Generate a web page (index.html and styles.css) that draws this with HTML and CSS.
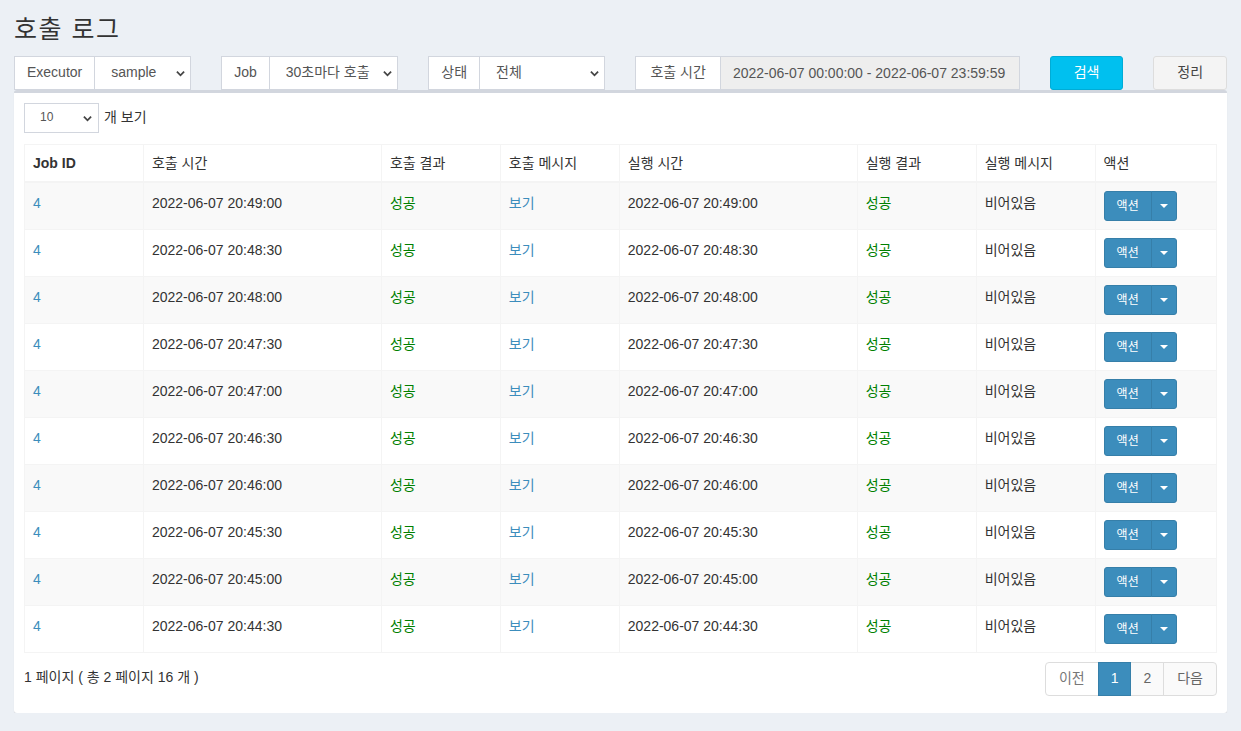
FILE: index.html
```html
<!DOCTYPE html>
<html lang="ko">
<head>
  <meta charset="UTF-8" />
  <title>호출 로그</title>
  <meta name="viewport" content="width=device-width, initial-scale=1" />
  <link rel="stylesheet" href="styles.css">
</head>
<body>

  <section class="content-header">
    <h1>호출 로그</h1>
  </section>

  <section class="content">

    <!-- Filters -->
    <div class="filter-row">
      <div class="col col-2">
        <div class="input-group">
          <span class="addon">Executor</span>
          <div class="select-wrap">
            <select class="form-select"><option>sample</option></select>
            <svg class="chevron" viewBox="0 0 10 7"><polyline points="1,1.5 5,5.5 9,1.5" /></svg>
          </div>
        </div>
      </div>
      <div class="col col-2">
        <div class="input-group">
          <span class="addon">Job</span>
          <div class="select-wrap">
            <select class="form-select"><option>30초마다 호출</option></select>
            <svg class="chevron" viewBox="0 0 10 7"><polyline points="1,1.5 5,5.5 9,1.5" /></svg>
          </div>
        </div>
      </div>
      <div class="col col-2">
        <div class="input-group">
          <span class="addon">상태</span>
          <div class="select-wrap">
            <select class="form-select"><option>전체</option></select>
            <svg class="chevron" viewBox="0 0 10 7"><polyline points="1,1.5 5,5.5 9,1.5" /></svg>
          </div>
        </div>
      </div>
      <div class="col col-4">
        <div class="input-group">
          <span class="addon addon-wide">호출 시간</span>
          <input class="form-input" type="text" readonly value="2022-06-07 00:00:00 - 2022-06-07 23:59:59">
        </div>
      </div>
      <div class="col col-1">
        <button class="btn btn-info">검색</button>
      </div>
      <div class="col col-1">
        <button class="btn btn-default">정리</button>
      </div>
    </div>

    <!-- Log table -->
    <div class="box">
      <div class="length-row">
        <div class="select-wrap select-sm">
          <select class="form-select"><option>10</option></select>
          <svg class="chevron" viewBox="0 0 10 7"><polyline points="1,1.5 5,5.5 9,1.5" /></svg>
        </div>
        <span>개 보기</span>
      </div>

      <table class="log-table">
        <thead>
          <tr>
            <th class="w10 bold">Job ID</th>
            <th class="w20">호출 시간</th>
            <th class="w10">호출 결과</th>
            <th class="w10">호출 메시지</th>
            <th class="w20">실행 시간</th>
            <th class="w10">실행 결과</th>
            <th class="w10">실행 메시지</th>
            <th>액션</th>
          </tr>
        </thead>
        <tbody id="logRows"></tbody>
      </table>

      <div class="table-footer">
        <div class="info">1 페이지 ( 총 2 페이지 16 개 )</div>
        <ul class="pagination">
          <li class="disabled"><a>이전</a></li>
          <li class="active"><a>1</a></li>
          <li><a>2</a></li>
          <li><a>다음</a></li>
        </ul>
      </div>
    </div>

  </section>

  <script>
    const times = [
      "20:49:00", "20:48:30", "20:48:00", "20:47:30", "20:47:00",
      "20:46:30", "20:46:00", "20:45:30", "20:45:00", "20:44:30"
    ];

    const tbody = document.getElementById("logRows");
    times.forEach(t => {
      const stamp = "2022-06-07 " + t;
      const tr = document.createElement("tr");
      tr.innerHTML =
        '<td><a class="link">4</a></td>' +
        '<td>' + stamp + '</td>' +
        '<td class="ok">성공</td>' +
        '<td><a class="link">보기</a></td>' +
        '<td>' + stamp + '</td>' +
        '<td class="ok">성공</td>' +
        '<td>비어있음</td>' +
        '<td class="action-cell"><div class="btn-group">' +
          '<button class="btn-action">액션</button>' +
          '<button class="btn-action btn-caret"><span class="caret"></span></button>' +
        '</div></td>';
      tbody.appendChild(tr);
    });
  </script>

</body>
</html>
```

FILE: styles.css
```css
body {
  margin: 0;
  background: #ecf0f5;
  color: #333;
  font-family: "Liberation Sans", "Noto Sans CJK KR", sans-serif;
  font-size: 14px;
  line-height: 1.42857;
}

.content-header {
  padding: 16px 14px 0;
}

.content-header h1 {
  margin: 0;
  font-size: 25px;
  font-weight: 400;
  letter-spacing: 1.5px;
  line-height: 26px;
}

.content {
  padding: 14px 14px 0;
}

/* Filter row, 12 column grid */
.filter-row {
  display: flex;
  margin: 0 -15px;
}

.col {
  box-sizing: border-box;
  padding: 0 15px;
}

.col-1 { width: 8.3333%; }
.col-2 { width: 16.6667%; }
.col-4 { width: 33.3333%; }

.input-group {
  display: flex;
  height: 34px;
}

.addon {
  flex: none;
  box-sizing: border-box;
  padding: 6px 12px;
  border: 1px solid #d2d6de;
  background: #fff;
  color: #555;
  white-space: nowrap;
}

.addon-wide {
  padding: 6px 14px;
}

.select-wrap {
  position: relative;
  flex: 1;
  min-width: 0;
}

.input-group .select-wrap,
.input-group .form-input {
  margin-left: -1px;
}

.form-select {
  -webkit-appearance: none;
  appearance: none;
  box-sizing: border-box;
  width: 100%;
  height: 100%;
  padding: 0 15px 0 16px;
  border: 1px solid #d2d6de;
  border-radius: 0;
  background: #fff;
  color: #555;
  font: inherit;
  outline: none;
}

.chevron {
  position: absolute;
  right: 6px;
  top: 50%;
  width: 9px;
  height: 7px;
  margin-top: -3px;
  fill: none;
  stroke: #444;
  stroke-width: 2;
  pointer-events: none;
}

.form-input {
  flex: 1;
  min-width: 0;
  box-sizing: border-box;
  height: 34px;
  padding: 6px 12px;
  border: 1px solid #d2d6de;
  background: #eee;
  color: #555;
  font: inherit;
  outline: none;
}

.btn {
  box-sizing: border-box;
  width: 100%;
  height: 34px;
  padding: 6px 12px;
  border: 1px solid transparent;
  border-radius: 3px;
  font: inherit;
  cursor: pointer;
}

.btn-info {
  background: #00c0ef;
  border-color: #00acd6;
  color: #fff;
}

.btn-default {
  background: #f4f4f4;
  border-color: #ddd;
  color: #444;
}

/* Box */
.box {
  background: #fff;
  border-top: 3px solid #d2d6de;
  border-radius: 3px;
  box-shadow: 0 1px 1px rgba(0, 0, 0, 0.1);
  padding: 10px 10px 17px;
}

.length-row {
  display: flex;
  align-items: center;
  gap: 5px;
  height: 30px;
}

.select-sm {
  flex: none;
  width: 75px;
  height: 30px;
}

.select-sm .form-select {
  padding-left: 15px;
  font-size: 12px;
}

.select-sm .chevron {
  right: 7px;
}

.length-row span {
  color: #333;
}

/* Table */
.log-table {
  width: 100%;
  margin-top: 11px;
  border-collapse: collapse;
  border: 1px solid #f4f4f4;
}

.log-table th,
.log-table td {
  padding: 8px;
  border: 1px solid #f4f4f4;
  text-align: left;
  vertical-align: top;
}

.log-table td {
  padding-top: 11px;
}

.log-table td.action-cell {
  padding: 8px;
}

.log-table th {
  font-weight: 400;
  padding-top: 9px;
  padding-bottom: 7px;
  border-bottom-width: 2px;
  vertical-align: bottom;
}

.log-table th.bold {
  font-weight: 700;
}

.w10 { width: 9.98%; }
.w20 { width: 19.96%; }

.log-table tbody tr:nth-child(odd) {
  background: #f9f9f9;
}

.link {
  color: #3c8dbc;
  text-decoration: none;
}

.ok {
  color: #008000;
}

.btn-group {
  display: inline-flex;
}

.btn-action {
  box-sizing: border-box;
  height: 30px;
  padding: 5px 12px;
  border: 1px solid #367fa9;
  border-radius: 3px 0 0 3px;
  background: #3c8dbc;
  color: #fff;
  font: inherit;
  font-size: 12px;
  line-height: 1.5;
}

.btn-caret {
  margin-left: -1px;
  padding: 5px 8px;
  border-radius: 0 3px 3px 0;
  display: flex;
  align-items: center;
}

.caret {
  width: 0;
  height: 0;
  border-top: 4px solid #fff;
  border-left: 4px solid transparent;
  border-right: 4px solid transparent;
}

/* Footer with paging */
.table-footer {
  display: flex;
  justify-content: space-between;
  align-items: flex-start;
  margin-top: 9px;
}

.info {
  padding-top: 6px;
}

.pagination {
  display: flex;
  margin: 0;
  padding: 0;
  list-style: none;
}

.pagination li a {
  display: block;
  padding: 6px 12px;
  margin-left: -1px;
  border: 1px solid #ddd;
  background: #fafafa;
  color: #666;
  cursor: pointer;
}

.pagination li:first-child a,
.pagination li:last-child a {
  padding: 6px 13px;
}

.pagination li:first-child a {
  margin-left: 0;
  border-radius: 4px 0 0 4px;
}

.pagination li:last-child a {
  border-radius: 0 4px 4px 0;
}

.pagination li.disabled a {
  background: #fff;
  color: #777;
}

.pagination li.active a {
  position: relative;
  background: #3c8dbc;
  border-color: #367fa9;
  color: #fff;
}
```
